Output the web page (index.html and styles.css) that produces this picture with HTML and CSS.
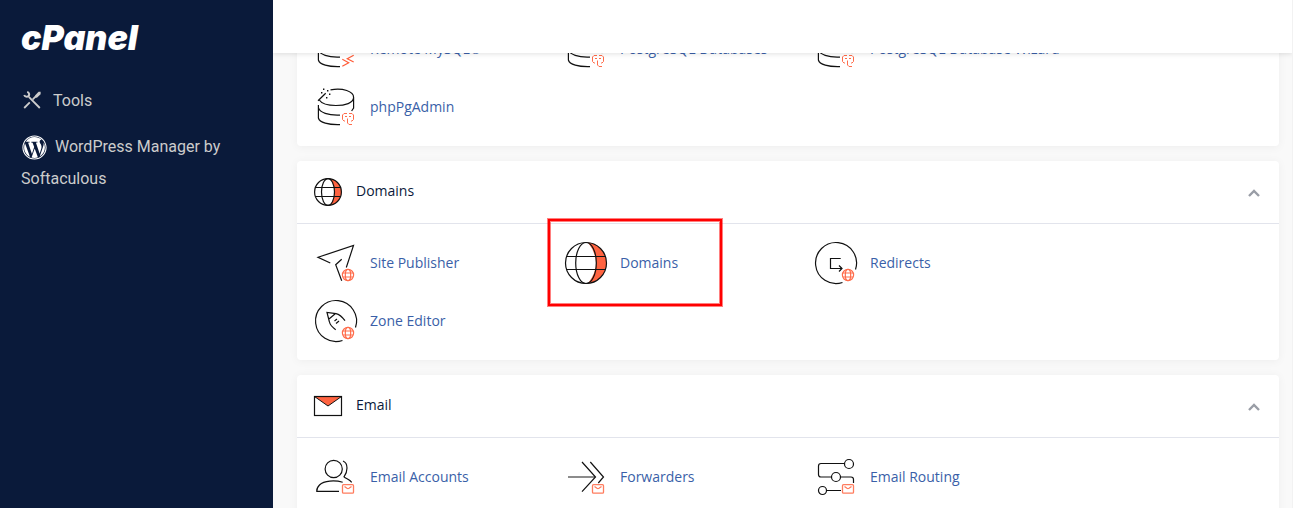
FILE: index.html
```html
<!DOCTYPE html>
<html lang="en">
<head>
<meta charset="utf-8">
<title>cPanel - Tools</title>
<link rel="stylesheet" href="styles.css">
</head>
<body>
<svg class="sprite" aria-hidden="true">
  <symbol id="badge-globe" viewBox="0 0 48 48">
    <g fill="none" stroke="#ff6c4b" stroke-width="1.200">
      <circle cx="36" cy="36" r="5.600"/><ellipse cx="36" cy="36" rx="2.700" ry="5.600"/><path d="M31 34h10M31 38h10"/>
    </g>
  </symbol>
  <symbol id="badge-mail" viewBox="0 0 48 48">
    <g fill="none" stroke="#ff7c5e" stroke-width="1.300">
      <rect x="30.500" y="31.700" width="11" height="8.500" rx="1"/><path d="M32.500 33.500l2.500 1.800q1 .6 2 0l2.500-1.800"/>
    </g>
  </symbol>
  <symbol id="badge-pg" viewBox="0 0 48 48">
    <path fill="none" stroke="#ff6c4b" d="M35 30.500h-3l-1.500 1.500v4.500l1.500 1.500h1M37 30.500h3l1.500 1.500v4.500l-1.500 1.500h-1M33 33.500h2M37 33.500h2M35.500 35.500v4.500l1.500 1.500h3"/>
  </symbol>
  <symbol id="database" viewBox="0 0 48 48">
    <g fill="none" stroke="#111" stroke-width="1.200">
      <ellipse cx="24" cy="14.300" rx="17.600" ry="8.200"/>
      <path d="M6.400 14v21c1 4.500 10 7 21.600 6.600M6.400 24.500c1 5 10 8.200 21.600 7.600M41.600 14v11l-2 3"/>
    </g>
  </symbol>
</svg>
<div class="app">
  <aside class="sidebar">
    <a class="logo" href="#">cPanel</a>
    <nav class="menu">
      <a class="menu-link" href="#"><svg class="menu-icon tools" viewBox="0 0 18 18" aria-hidden="true"><g fill="none" stroke="#ccc"><path stroke-width="1.800" d="M5.800 5.800L16.800 17M1.200 17l5.600-5.600M9.800 8.400l3.400-3.600"/><path stroke-width="2" d="M4.200.9c2 .7 2.500 2.700 1.300 4.100-1.400 1.200-3.600.8-4.300-1"/></g><path fill="#ccc" d="M12 4.600L15.600.8h2v2.400l-3.700 3.500-1.900-.2z"/></svg>Tools</a>
      <a class="menu-link" href="#"><svg class="menu-icon wp" viewBox="0 0 512 512" aria-hidden="true"><path fill="#fff" d="M61.700 169.400l101.500 278C92.200 413 43.300 340.200 43.300 256c0-30.900 6.600-60.100 18.400-86.600zm337.900 75.900c0-26.300-9.400-44.500-17.500-58.700-10.800-17.500-20.900-32.400-20.900-49.900 0-19.600 14.800-37.800 35.700-37.800.9 0 1.800.1 2.800.2-37.900-34.700-88.300-55.900-143.700-55.900-74.300 0-139.700 38.100-177.800 95.900 5 .2 9.700.3 13.700.3 22.200 0 56.700-2.700 56.700-2.700 11.500-.7 12.800 16.200 1.400 17.500 0 0-11.500 1.300-24.300 2l77.500 230.400L249.800 247l-33.100-90.800c-11.500-.7-22.300-2-22.300-2-11.500-.7-10.100-18.200 1.300-17.500 0 0 35.100 2.700 56 2.700 22.200 0 56.700-2.700 56.700-2.700 11.500-.7 12.800 16.200 1.400 17.500 0 0-11.500 1.300-24.300 2l76.900 228.700 21.200-70.900c9-29.400 16-50.500 16-68.700zm-139.900 29.300l-63.800 185.500c19.100 5.600 39.200 8.700 60.100 8.700 24.800 0 48.500-4.300 70.600-12.100-.6-.9-1.100-1.900-1.500-2.900l-65.400-179.200zm183-120.700c.9 6.800 1.400 14 1.400 21.900 0 21.600-4 45.800-16.200 76.200l-65 187.900C426.200 403 468.700 334.500 468.700 256c0-37-9.400-71.800-26-102.100zM504 256c0 136.800-111.300 248-248 248C119.200 504 8 392.700 8 256 8 119.200 119.200 8 256 8c136.700 0 248 111.200 248 248zm-22 0c0-125-101-226-226-226S30 131 30 256s101 226 226 226 226-101 226-226z"/></svg>WordPress Manager by Softaculous</a>
    </nav>
  </aside>
  <main class="main">
    <header class="topbar"></header>
    <div class="content">
      <section class="card" aria-label="Databases">
        <div class="items">
          <a class="item" href="#"><svg class="icon" viewBox="0 0 48 48" aria-hidden="true"><use href="#database"/><path fill="none" stroke="#ff5c38" stroke-width="1.200" d="M41.700 30.300L35.300 33.700l6.400 3.300M30.300 34.300l6.400 3.400-6.400 3.600"/></svg>Remote MySQL®</a>
          <a class="item" href="#"><svg class="icon" viewBox="0 0 48 48" aria-hidden="true"><use href="#database"/><use href="#badge-pg"/></svg>PostgreSQL Databases</a>
          <a class="item" href="#"><svg class="icon" viewBox="0 0 48 48" aria-hidden="true"><use href="#database"/><use href="#badge-pg"/></svg>PostgreSQL Database Wizard</a>
          <a class="item" href="#"><svg class="icon" viewBox="0 0 48 48" aria-hidden="true"><path fill="none" stroke="#111" stroke-width="1.200" d="M18.500 6.800C31 4.500 41.600 8.500 41.600 14.300S33 22.500 24 22.500c-8 0-14.500-2-16.500-5.200M6.400 22v13c1 4.500 10 7 21.600 6.600M6.400 24.500c1 5 10 8.200 21.600 7.600M41.600 14v11l-2 3M6 17.700l7.700-7.400"/><path fill="#111" d="M9 9h1.400v1.400H9zM11 5.600h1.400V7H11zM15 7h1.400v1.400H15zM17 10.600h1.400V12H17zM14 14h1.400v1.400H14z"/><use href="#badge-pg"/></svg>phpPgAdmin</a>
        </div>
      </section>
      <section class="card">
        <div class="card-head">
          <svg class="head-icon" viewBox="0 0 32 32" aria-hidden="true"><path fill="#ff6340" d="M18 2.750a13.400 13.400 0 0 1 0 26.500Q27 16 18 2.750z"/><g fill="none" stroke="#111" stroke-width="1.200"><circle cx="16" cy="16" r="13.400"/><ellipse cx="16" cy="16" rx="6.500" ry="13.400"/><path d="M3.500 11.500h25M3.500 20.500h25"/></g></svg>
          <h2 class="title">Domains</h2>
          <button class="toggle" type="button" aria-label="Collapse Domains"><svg class="chevron" viewBox="0 0 14 8" aria-hidden="true"><path d="M2 7L7 2 12 7"/></svg></button>
        </div>
        <div class="items">
          <a class="item" href="#"><svg class="icon" viewBox="0 0 48 48" aria-hidden="true"><path fill="none" stroke="#111" stroke-width="1.200" d="M18.300 24L6 18.300 41.500 6.500 34.300 28.500M29.700 20.300l-6 5.400 6 16"/><use href="#badge-globe"/></svg>Site Publisher</a>
          <a class="item highlighted" href="#"><svg class="icon" viewBox="0 0 48 48" aria-hidden="true"><path fill="#ff6340" d="M26 3.600a20.500 20.500 0 0 1 0 40.800Q42 24 26 3.600z"/><g fill="none" stroke="#111" stroke-width="1.200"><circle cx="24" cy="24" r="20.500"/><ellipse cx="24" cy="24" rx="10.300" ry="20.500"/><path d="M4.500 17.500h39M4.500 30.500h39"/></g></svg>Domains</a>
          <a class="item" href="#"><svg class="icon" viewBox="0 0 48 48" aria-hidden="true"><path fill="none" stroke="#111" stroke-width="1.200" d="M43.500 30.500A20.500 20.500 0 1 0 30.500 43.500M28.700 19.500H18.500v10H30M27 26.500l3 3-3 3"/><use href="#badge-globe"/></svg>Redirects</a>
          <a class="item" href="#"><svg class="icon" viewBox="0 0 48 48" aria-hidden="true"><path fill="none" stroke="#111" stroke-width="1.200" d="M43.500 30.500A20.500 20.500 0 1 0 30.500 43.500M23.700 32.700C20 30 18 28 17.300 24.500L15 15.500l9 1.200c3.500.8 6 3 9 7M23.500 16.500l-6.200 5.300M22.500 24l2.500-2M24 26.500l3-2.500"/><use href="#badge-globe"/></svg>Zone Editor</a>
        </div>
      </section>
      <section class="card">
        <div class="card-head">
          <svg class="head-icon" viewBox="0 0 32 32" aria-hidden="true"><path fill="#ff6340" stroke="#111" d="M2.500 6.500L16 16 29.500 6.500z"/><rect x="2.500" y="6.500" width="27" height="19" fill="none" stroke="#111" stroke-width="1.200"/></svg>
          <h2 class="title">Email</h2>
          <button class="toggle" type="button" aria-label="Collapse Email"><svg class="chevron" viewBox="0 0 14 8" aria-hidden="true"><path d="M2 7L7 2 12 7"/></svg></button>
        </div>
        <div class="items">
          <a class="item" href="#"><svg class="icon" viewBox="0 0 48 48" aria-hidden="true"><path fill="none" stroke="#111" stroke-width="1.200" d="M30.700 29.300C23 27 12 27.500 7.500 32 5.500 34 4.500 36 4.800 38.400H27M31 8c2.500 1 4 3.500 4 7s-1.200 6.500-3 8.800c2 2 5.500 2.500 7.700 5.500"/><circle cx="21.700" cy="16" r="8.600" fill="none" stroke="#111" stroke-width="1.200"/><use href="#badge-mail"/></svg>Email Accounts</a>
          <a class="item" href="#"><svg class="icon" viewBox="0 0 48 48" aria-hidden="true"><path fill="none" stroke="#666" stroke-width="1.500" d="M6 24h27"/><path fill="none" stroke="#111" stroke-width="1.200" d="M20 9l13.500 15L20 38.700M28.300 9l13.200 15-5.200 6"/><use href="#badge-mail"/></svg>Forwarders</a>
          <a class="item" href="#"><svg class="icon" viewBox="0 0 48 48" aria-hidden="true"><g fill="none" stroke="#111" stroke-width="1.200"><circle cx="37" cy="11" r="4.500"/><circle cx="24" cy="24" r="4.500"/><circle cx="10.500" cy="37.500" r="4"/><path d="M32.500 10.500H9q-2.500 0-2.500 2.500v8.500q0 2.500 2.500 2.500h10.500M28.500 24H39q2.500 0 2.500 2.500V30M14.500 37.500H29"/></g><use href="#badge-mail"/></svg>Email Routing</a>
        </div>
      </section>
    </div>
  </main>
</div>
</body>
</html>
```

FILE: styles.css
```css
*,
*::after {
  box-sizing: border-box;
}

body {
  margin: 0;
  font: 14px/20px "Open Sans", sans-serif;
}

a {
  color: inherit;
  text-decoration: none;
}

.sprite {
  display: none;
}

.app {
  display: grid;
  grid-template-columns: 273px minmax(0, 1fr);
  height: 100vh;
}

.sidebar {
  padding: 16px 21px;
  background: #0a1a3a;
  color: #ccc;
}

.logo {
  display: block;
  color: #fff;
  font: italic 900 34px/44px Inter, sans-serif;
}

.menu {
  display: flex;
  flex-direction: column;
  gap: 14px;
  margin-top: 25px;
  font: 16px/32px Roboto, sans-serif;
}

.menu-icon {
  margin-left: 1px;
  vertical-align: middle;
}

.tools {
  width: 20px;
  height: 18px;
  margin-right: 11px;
  margin-bottom: 4px;
}

.wp {
  width: 25px;
  height: 25px;
  margin-right: 8px;
}

.main {
  position: relative;
  overflow: hidden;
  background: #f9f9f9;
  border-right: 1px solid #f2f2f2;
}

.topbar {
  position: absolute;
  inset: 0 0 auto;
  z-index: 1;
  height: 53px;
  background: #fff;
  box-shadow: 0 1px 5px rgba(0, 0, 0, 0.12);
}

.content {
  display: flex;
  flex-direction: column;
  gap: 15px;
  padding: 10px 13px 24px 24px;
}

.card {
  border-radius: 4px;
  background: #fff;
  box-shadow: 0 1px 10px rgba(0, 0, 0, 0.05);
}

.card-head {
  display: flex;
  align-items: center;
  gap: 12px;
  padding: 15px 18px 15px 15px;
  border-bottom: 1px solid #e2e4ec;
}

.head-icon {
  width: 32px;
  height: 32px;
}

.title {
  flex: 1;
  margin: 0;
  padding-bottom: 2px;
  color: #0a1a3a;
  font-size: 14px;
  font-weight: 400;
}

.toggle {
  display: flex;
  padding: 2px 0 0;
  border: 0;
  background: none;
}

.chevron {
  width: 14px;
  height: 8px;
  fill: none;
  stroke: #999da6;
  stroke-width: 2.4;
}

.items {
  display: grid;
  grid-template-columns: repeat(auto-fill, 250px);
  padding: 10px 15px;
}

.item {
  position: relative;
  display: flex;
  align-items: center;
  gap: 10px;
  padding: 5px 0;
  color: #3a5fa8;
}

.icon {
  width: 48px;
  height: 48px;
}

.highlighted::after {
  content: "";
  position: absolute;
  top: -15px;
  left: -14px;
  width: 174px;
  height: 87px;
  border: 2px solid #f00;
  box-shadow: 0 0 0 1px rgba(255, 0, 0, 0.5), inset 0 0 0 1px rgba(255, 0, 0, 0.5);
}
```
